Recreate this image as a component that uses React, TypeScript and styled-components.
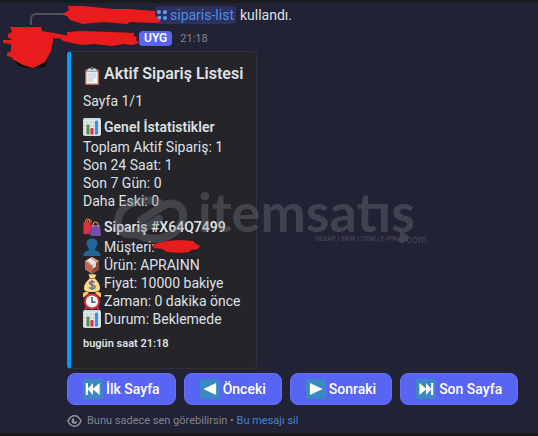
import React from "react";
import styled, { createGlobalStyle } from "styled-components";

const GlobalStyle = createGlobalStyle`
  * { box-sizing: border-box; }
  html { background: #212233; }
  body { margin: 0; background: #212233; color: #dfe0e4; font: 400 14px/18px Roboto, "Noto Sans", sans-serif; }
`;

const Page = styled.main`
  position: relative;
  min-height: 100vh;
  display: flex;
  flex-direction: column;
  overflow: hidden;
  background: #212233;
  border-top: 3px solid #1b1b1f;
  border-bottom: 3px solid #1a181c;
`;

const ReplyRow = styled.div`
  display: flex;
  align-items: center;
  height: 22px;
  margin-top: 1px;
  padding-left: 30px;
`;

const ReplySpine = styled.span`
  flex: none;
  align-self: flex-end;
  width: 34px;
  height: 12px;
  margin-bottom: 1px;
  border: 2px solid #50515c;
  border-right: 0;
  border-bottom: 0;
  border-top-left-radius: 6px;
`;

const Redaction = styled.svg`
  display: block;
  flex: none;
  position: relative;
  z-index: 1;
  overflow: visible;
  fill: #e81c1c;
`;

const Command = styled.a`
  display: flex;
  align-items: center;
  gap: 3px;
  height: 18px;
  padding: 0 2px;
  border-radius: 3px;
  background: #2c3160;
  color: #4b8ee0;
  text-decoration: none;
`;

const ReplyText = styled.span`
  margin-left: 4px;
`;

const Message = styled.article`
  display: grid;
  grid-template-columns: 67px minmax(0, 1fr);
`;

const Avatar = styled.div`
  padding: 1px 0 0 3px;
`;

const Content = styled.div`
  min-width: 0;
`;

const Header = styled.header`
  display: flex;
  align-items: center;
  height: 25px;
`;

const NameSlot = styled.span`
  flex: none;
  display: flex;
  justify-content: flex-end;
  width: 72px;
`;

const AppTag = styled.span`
  padding: 0 5px;
  height: 15px;
  border-radius: 4px;
  background: #5865f2;
  color: #fff;
  font-size: 12px;
  font-weight: 600;
  line-height: 15px;
`;

const Time = styled.time`
  margin-left: 8px;
  color: #83848f;
  font-size: 11px;
`;

const Embed = styled.section`
  width: fit-content;
  min-width: 190px;
  padding: 10px 12px 16px;
  border: 1px solid #303037;
  border-left: 4px solid #0099ff;
  border-radius: 4px;
  background: #242429;
`;

const Title = styled.h1`
  display: flex;
  align-items: center;
  gap: 3px;
  margin: 0 0 7px;
  font-size: 16px;
  line-height: 23px;
  font-weight: 600;

  svg { align-self: flex-end; }
`;

const Paragraph = styled.p`
  margin: 0;
`;

const Field = styled.section`
  margin-top: 8px;
`;

const FieldTitle = styled.h2`
  display: flex;
  gap: 3px;
  margin: 0 0 2px;
  font-size: 14px;
  line-height: 18px;
  font-weight: 600;
`;

const Line = styled.div`
  display: flex;
  gap: 3px;
`;

const EmbedFooter = styled.footer`
  margin-top: 8px;
  font-size: 11px;
  line-height: 16px;
  font-weight: 600;
`;

const Actions = styled.div`
  display: flex;
  flex-wrap: wrap;
  gap: 8px;
  margin-top: 4px;
`;

const ActionButton = styled.button`
  display: flex;
  align-items: center;
  gap: 3px;
  height: 32px;
  padding: 0 15px;
  border: 1px solid #6672f3;
  border-radius: 8px;
  background: #5865f2;
  color: #fff;
  font: inherit;
  font-weight: 500;
`;

const Notice = styled.footer`
  display: flex;
  align-items: center;
  margin-top: 8px;
  color: #83848f;
  font-size: 11px;
  line-height: 16px;

  svg { margin-right: 5px; }
`;

const DeleteLink = styled.a`
  color: #4583d2;
  text-decoration: none;
`;

const Watermark = styled.div`
  position: absolute;
  left: 112px;
  top: 186px;
  display: flex;
  color: #808089;
  opacity: 0.34;
  pointer-events: none;

  svg { margin-top: 3px; }
`;

const Brand = styled.div`
  font: 700 54px/46px Lato, sans-serif;
`;

const Wordmark = styled.div`
  margin-left: 8px;
`;

const Tagline = styled.div`
  display: flex;
  justify-content: flex-end;
  align-items: center;
  margin-right: -12px;
  font: 700 6px/8px Inter, sans-serif;

  b { font-size: 10px; font-weight: 500; }
`;

const Dot = styled.i`
  width: 7px;
  height: 7px;
  margin: 0 1px;
  border-radius: 50%;
  background: currentColor;
`;

const Emoji = ({ size = 18, children }: { size?: number; children: React.ReactNode }) => (
  <svg width={size} height={size} viewBox="0 0 36 36" aria-hidden="true">
    {children}
  </svg>
);

const Clipboard = () => (
  <Emoji>
    <path fill="#C1694F" d="M32 34a2 2 0 0 1-2 2H6a2 2 0 0 1-2-2V7a2 2 0 0 1 2-2h24a2 2 0 0 1 2 2z" />
    <path fill="#FFF" d="M29 32a1 1 0 0 1-1 1H8a1 1 0 0 1-1-1V10a1 1 0 0 1 1-1h20a1 1 0 0 1 1 1z" />
    <path fill="#CCD6DD" d="M25 3h-4a3 3 0 1 0-6 0h-4a2 2 0 0 0-2 2v5h18V5a2 2 0 0 0-2-2z" />
    <path fill="#D5DEE5" d="M9 11h18v12h-5v7H9z" />
    <circle cx="18" cy="3" r="2" fill="#292F33" />
    <path fill="#99AAB5" d="M9 8h18v2H9z" />
  </Emoji>
);

const Chart = () => (
  <Emoji>
    <rect width="36" height="36" rx="4" fill="#CCD6DD" />
    <path stroke="#E1E8ED" strokeWidth="2" d="M5 1v34M12 1v34M19 1v34M26 1v34M33 1v34M1 5h34M1 12h34M1 19h34M1 26h34M1 33h34" />
    <path fill="#5C913B" d="M7 33V15a2 2 0 0 1 2-2h2a2 2 0 0 1 2 2v18z" />
    <path fill="#DD2E44" d="M15 33V22a2 2 0 0 1 2-2h2a2 2 0 0 1 2 2v11z" />
    <path fill="#3B94D9" d="M24 33V7a2 2 0 0 1 2-2h2a2 2 0 0 1 2 2v26z" />
  </Emoji>
);

const Bags = () => (
  <Emoji>
    <path fill="none" stroke="#F4900C" strokeWidth="2" d="M5 12V6a4 4 0 0 1 8 0v6M9 12V5a4 4 0 0 1 7 0v5" />
    <path fill="#DD2E44" d="M1 8h16l3 24H1z" />
    <path fill="#A0041E" d="M15 8h4l2 24h-4z" />
    <path fill="#744EAA" d="M16 14h18l2 22H15z" />
    <path fill="#553788" d="m16 14-3 19 3 3z" />
    <path fill="none" stroke="#FFAC33" strokeWidth="2" d="M20 18v-5a5 5 0 0 1 10 0v5" />
  </Emoji>
);

const Person = () => (
  <Emoji>
    <path fill="#226699" d="M24 25c0-2 1-4 2-6 2-3 3-6 3-9 0-6-5-9-11-9S7 4 7 10c0 3 1 6 3 9 1 2 2 4 2 6-7 1-11 4-11 11h34c0-7-4-10-11-11z" />
  </Emoji>
);

const Package = () => (
  <Emoji>
    <path fill="#C1694F" d="m18 2 14 8v17l-14 9-14-9V10z" />
    <path fill="#D99E82" d="m4 10 14-8 14 8-14 10z" />
    <path fill="#8f4a36" d="m18 20 14-10v17l-14 9z" />
    <path fill="#E1E8ED" d="m8 8 7-4 11 9-7 5z" />
    <path fill="#D5DEE5" d="m19 18 7-5v8l-7 5z" />
  </Emoji>
);

const MoneyBag = () => (
  <Emoji>
    <path fill="#FDD888" d="M23 9l4-8c-3 1-5-1-7 0-2-1-5 1-9-1l3 9C7 14 2 21 2 28c0 6 4 8 16 8s16-2 16-8c0-7-4-14-11-19z" />
    <path fill="none" stroke="#BF6952" strokeWidth="2" d="M12 9h13" />
    <path fill="none" stroke="#67757F" strokeWidth="3" d="M23 17c-2-2-10-3-10 1 0 5 11 3 11 8 0 4-8 4-12 1M18 12v20" />
  </Emoji>
);

const Alarm = () => (
  <Emoji>
    <path fill="#FFCC4D" d="M1 11a7 7 0 0 1 11-9zM35 11A7 7 0 0 0 24 2z" />
    <path stroke="#DD2E44" strokeWidth="4" d="m8 31-4 4M28 31l4 4" />
    <circle cx="18" cy="19" r="16" fill="#DD2E44" />
    <circle cx="18" cy="19" r="12" fill="#F5F8FA" />
    <path fill="none" stroke="#292F33" strokeWidth="2.5" d="M18 10v10h7" />
  </Emoji>
);

const keycapGlyphs = {
  first: "M5 7h4v10l9-10v10l12-10v22l-12-10v10l-9-10v10H5z",
  previous: "M29 7v22L6 18z",
  next: "M7 7v22l23-11z",
  last: "M31 7h-4v10l-9-10v10L6 7v22l12-10v10l9-10v10h4z",
};

const Keycap = ({ glyph }: { glyph: keyof typeof keycapGlyphs }) => (
  <Emoji size={20}>
    <rect width="36" height="36" rx="4" fill="#3B88C3" />
    <path fill="#FFF" d={keycapGlyphs[glyph]} />
  </Emoji>
);

const buttons: { glyph: keyof typeof keycapGlyphs; label: string }[] = [
  { glyph: "first", label: "İlk Sayfa" },
  { glyph: "previous", label: "Önceki" },
  { glyph: "next", label: "Sonraki" },
  { glyph: "last", label: "Son Sayfa" },
];

export default function App() {
  return (
    <>
      <GlobalStyle />
      <Page>
        <ReplyRow>
          <ReplySpine />
          <Redaction width="91" height="20" viewBox="0 0 91 20" aria-hidden="true">
            <path d="M-1 9L5 5L4 1L19 1L49 4L66 4L91 6L91 11L97 16L93 18L66 17L63 19L40 17L19 19L6 15L3 11L-1 10z" />
          </Redaction>
          <Command href="#siparis-list">
            <svg width="10" height="10" viewBox="0 0 10 10" fill="#5b9cf0" aria-hidden="true">
              <path d="M2 0a2 2 0 1 1 0 4 2 2 0 0 1 0-4M6 2a2 2 0 1 1 2 2H6zM0 8a2 2 0 0 1 2-2h2v2a2 2 0 0 1-4 0M8 6a2 2 0 1 1 0 4 2 2 0 0 1 0-4" />
            </svg>
            siparis-list
          </Command>
          <ReplyText>kullandı.</ReplyText>
        </ReplyRow>

        <Message>
          <Avatar>
            <Redaction width="51" height="42" viewBox="0 0 51 42" aria-hidden="true">
              <path fill="#0d0c10" d="M11 33l5 6 9 2 9-1 11-9-3 9-12 1z" />
              <path d="M7 0L38 0L39 4L62 8L62 12L50 11L50 14L48 24L42 35L30 41L20 38L11 33L8 30L4 29L4 26L8 24L8 17L0 16L0 13L9 13L5 10L5 7L9 5z" />
            </Redaction>
          </Avatar>
          <Content>
            <Header>
              <NameSlot>
                <Redaction width="77" height="16" viewBox="0 0 77 16" aria-hidden="true">
                  <path d="M-1 7L5 4L5 1L20 0L50 1L72 2L72 5L75 6L74 9L77 12L70 14L61 13L50 15L33 13L20 14L5 11L-1 9z" />
                </Redaction>
              </NameSlot>
              <AppTag>UYG</AppTag>
              <Time>21:18</Time>
            </Header>

            <Embed>
              <Title><Clipboard />Aktif Sipariş Listesi</Title>
              <Paragraph>Sayfa 1/1</Paragraph>
              <Field>
                <FieldTitle><Chart />Genel İstatistikler</FieldTitle>
                <Line>Toplam Aktif Sipariş: 1</Line>
                <Line>Son 24 Saat: 1</Line>
                <Line>Son 7 Gün: 0</Line>
                <Line>Daha Eski: 0</Line>
              </Field>
              <Field>
                <FieldTitle><Bags />Sipariş #X64Q7499</FieldTitle>
                <Line>
                  <Person />Müşteri:
                  <Redaction width="44" height="18" viewBox="0 0 44 18" aria-hidden="true">
                    <path d="M-6 8l5-3 9-2 14-1 13 1 3 3 4 2-2 3-7 1-2 2-10 1-12-1-5-3-8-1z" />
                  </Redaction>
                </Line>
                <Line><Package />Ürün: APRAINN</Line>
                <Line><MoneyBag />Fiyat: 10000 bakiye</Line>
                <Line><Alarm />Zaman: 0 dakika önce</Line>
                <Line><Chart />Durum: Beklemede</Line>
              </Field>
              <EmbedFooter>bugün saat 21:18</EmbedFooter>
            </Embed>

            <Actions>
              {buttons.map((button) => (
                <ActionButton key={button.glyph} type="button">
                  <Keycap glyph={button.glyph} />
                  {button.label}
                </ActionButton>
              ))}
            </Actions>

            <Notice>
              <svg width="15" height="14" viewBox="0 0 15 14" aria-hidden="true">
                <path fill="none" stroke="#92939d" strokeWidth="1.5" d="M1 7C4 0 11 0 14 7C11 14 4 14 1 7z" />
                <path fill="#92939d" d="M7 4a3 3 0 1 0 3.500 3.500H7z" />
              </svg>
              <span>
                Bunu sadece sen görebilirsin • <DeleteLink href="#sil">Bu mesajı sil</DeleteLink>
              </span>
            </Notice>
          </Content>
        </Message>

        <Watermark aria-hidden="true">
          <svg width="78" height="54" viewBox="0 0 78 54" fill="none" stroke="currentColor" strokeWidth="8" strokeLinecap="round">
            <path d="M52 14C46 8 32 7 24 10C10 13 5 24 6 32C7 42 18 45 26 40L47 27" />
            <path d="M25 42C32 47 45 48 53 45C67 41 72 30 71 22C70 12 59 9 51 14L29 28" />
          </svg>
          <Wordmark>
            <Brand>itemsatış</Brand>
            <Tagline><span>HESAP / SKIN / ITEM / E-PIN</span><Dot /><b>com</b></Tagline>
          </Wordmark>
        </Watermark>
      </Page>
    </>
  );
}
